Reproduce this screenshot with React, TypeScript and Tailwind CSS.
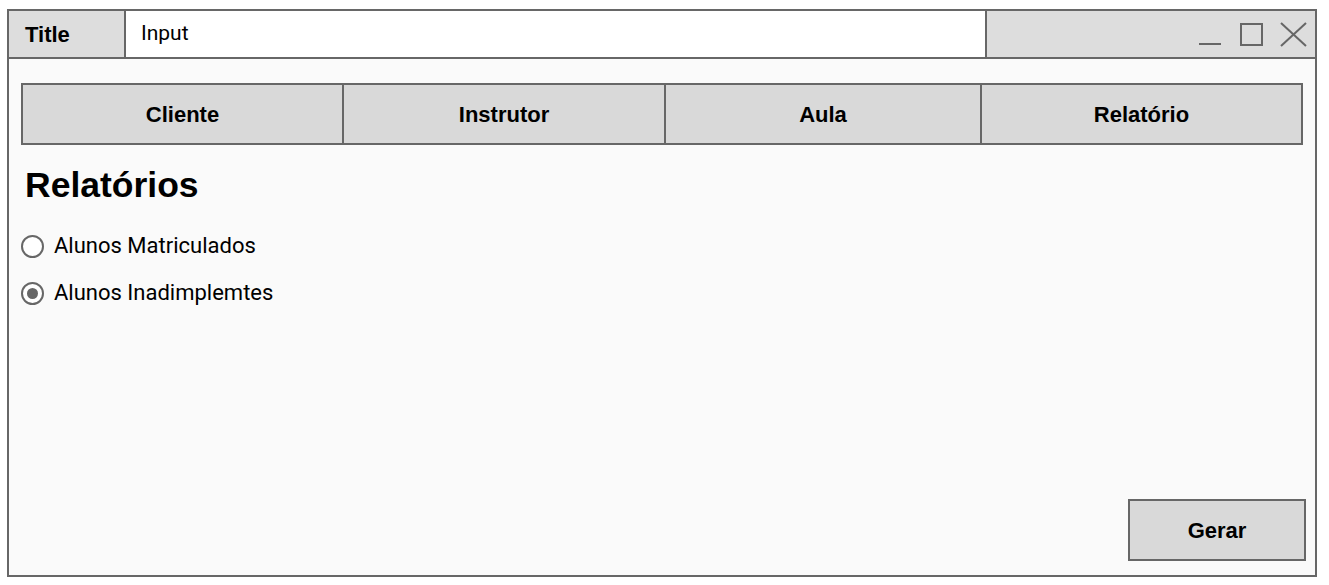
import React from "react";

const bold = { fontFamily: '"Liberation Sans", Arial, sans-serif' };

export default function App() {
  const tabs = [
    { t: "Cliente", w: "w-[319px]" },
    { t: "Instrutor", w: "w-[322px]" },
    { t: "Aula", w: "w-[316px]" },
    { t: "Relatório", w: "flex-1" },
  ];
  return (
    <div className="w-[1329px] h-[585px] bg-white pt-[9px] pl-[7px]" style={{ fontFamily: 'Roboto, "Liberation Sans", sans-serif' }}>
      <div className="w-[1310px] h-[568px] border-2 border-[#676767] bg-[#fafafa] flex flex-col">
        {/* Title bar */}
        <div className="flex h-[48px] border-b-2 border-[#676767] shrink-0">
          <div className="w-[117px] border-r-2 border-[#676767] bg-[#dddddd] flex items-center pl-[16px] text-[22px] font-bold text-black" style={bold}>
            Title
          </div>
          <div className="w-[861px] border-r-2 border-[#676767] bg-white flex items-center pl-[15px] text-[21px] text-black">
            Input
          </div>
          <div className="flex-1 bg-[#dddddd] relative">
            <svg className="absolute left-[210px] top-0" width="120" height="46" viewBox="0 0 120 46">
              <line x1="2" y1="33" x2="24" y2="33" stroke="#666" strokeWidth="2" />
              <rect x="44" y="13" width="21" height="21" fill="none" stroke="#666" strokeWidth="2" />
              <line x1="84" y1="12" x2="109" y2="35" stroke="#666" strokeWidth="2" />
              <line x1="109" y1="12" x2="84" y2="35" stroke="#666" strokeWidth="2" />
            </svg>
          </div>
        </div>

        {/* Content */}
        <div className="flex-1 flex flex-col pl-[12px] pr-[12px] pt-[24px]">
          <div className="flex h-[62px] border-2 border-[#676767] bg-[#d9d9d9]">
            {tabs.map((x, i) => (
              <div
                key={x.t}
                className={`${x.w} flex items-center justify-center text-[22px] font-bold text-black ${i > 0 ? "border-l-2 border-[#676767]" : ""}`}
                style={bold}
              >
                {x.t}
              </div>
            ))}
          </div>

          <h1 className="mt-[20px] ml-[4px] text-[35.5px] leading-[40px] font-bold text-black" style={bold}>
            Relatórios
          </h1>

          <div className="mt-[30px] flex flex-col gap-[25px]">
            <label className="flex items-center gap-[10px] h-[22px]">
              <span className="w-[23px] h-[23px] rounded-full border-2 border-[#676767] bg-white shrink-0" />
              <span className="text-[22px] text-black leading-none">Alunos Matriculados</span>
            </label>
            <label className="flex items-center gap-[10px] h-[22px]">
              <span className="w-[23px] h-[23px] rounded-full border-2 border-[#676767] bg-white shrink-0 flex items-center justify-center">
                <span className="w-[11px] h-[11px] rounded-full bg-[#676767]" />
              </span>
              <span className="text-[22px] text-black leading-none">Alunos Inadimplemtes</span>
            </label>
          </div>

          <div className="flex-1" />
          <div className="flex justify-end pb-[14px] -mr-[3px]">
            <button className="w-[178px] h-[62px] border-2 border-[#676767] bg-[#d9d9d9] text-[22px] font-bold text-black" style={bold}>
              Gerar
            </button>
          </div>
        </div>
      </div>
    </div>
  );
}
